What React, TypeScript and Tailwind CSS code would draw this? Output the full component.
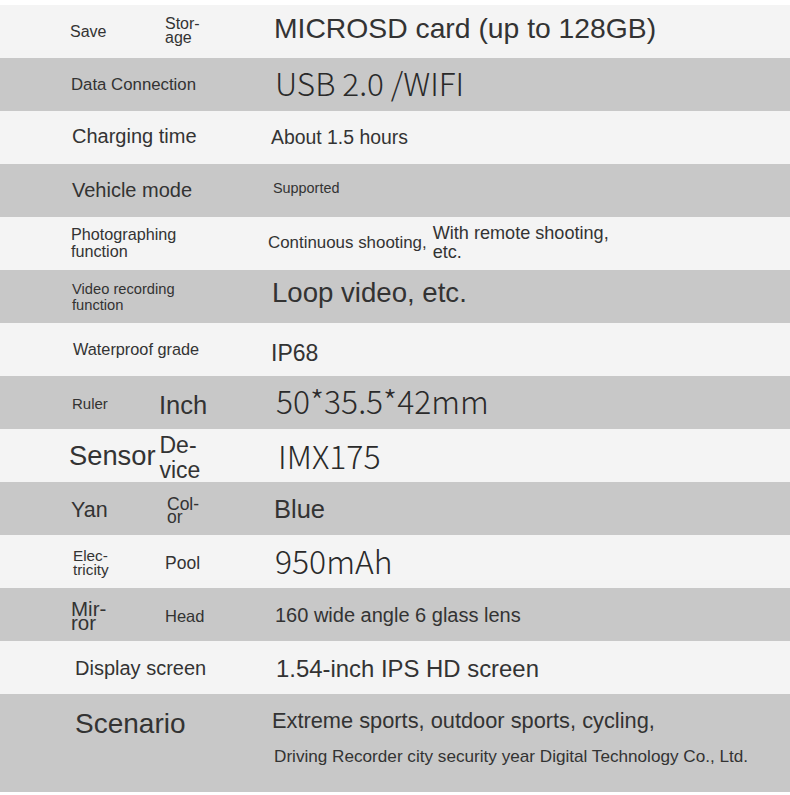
import React from "react";

const light = "bg-[#f4f4f4]";
const gray = "bg-[#c8c8c8]";
const cjk = "font-['Noto_Sans_CJK_SC','Noto_Sans',sans-serif] font-light text-[#2a2a2a]";

function Row({ bg, children, className = "" }: { bg: string; children: React.ReactNode; className?: string }) {
  return <div className={`flex h-[53px] items-center ${bg} ${className}`}>{children}</div>;
}

export default function App() {
  return (
    <div className="w-[790px] h-[795px] bg-white pt-[5px] text-[#333333] font-['Liberation_Sans',Arial,sans-serif] leading-none">
      <Row bg={light}>
        <div className="w-[268px] pl-[70px] flex items-center">
          <span className="w-[95px] text-[16px]">Save</span>
          <span className="text-[16px] leading-[14px] -mt-[2px]">Stor-<br />age</span>
        </div>
        <span className="ml-[6px] text-[28.3px] mb-[6px]">MICROSD card (up to 128GB)</span>
      </Row>
      <Row bg={gray}>
        <div className="w-[268px] pl-[71px]">
          <span className="text-[16.8px] block mt-[1px]">Data Connection</span>
        </div>
        <span className={`ml-[7px] text-[31.5px] mb-[4px] ${cjk}`}>USB 2.0 /WIFI</span>
      </Row>
      <Row bg={light}>
        <div className="w-[268px] pl-[72px]">
          <span className="text-[20px] block mb-[4px]">Charging time</span>
        </div>
        <span className="ml-[3px] text-[19.4px]">About 1.5 hours</span>
      </Row>
      <Row bg={gray}>
        <div className="w-[268px] pl-[72px]">
          <span className="text-[20px] block mb-[1px]">Vehicle mode</span>
        </div>
        <span className="ml-[5px] text-[14.4px] mb-[4px]">Supported</span>
      </Row>
      <Row bg={light}>
        <div className="w-[268px] pl-[71px]">
          <span className="text-[16.2px] leading-[17px] block -mt-[2px]">Photographing<br />function</span>
        </div>
        <span className="ml-[0px] text-[16.9px]">Continuous shooting,</span>
        <span className="ml-[6px] text-[18.1px] leading-[19px] mb-[1px]">With remote shooting,<br />etc.</span>
      </Row>
      <Row bg={gray}>
        <div className="w-[268px] pl-[72px]">
          <span className="text-[14.7px] leading-[16px] block">Video recording<br />function</span>
        </div>
        <span className="ml-[4px] text-[27.6px] mb-[8px]">Loop video, etc.</span>
      </Row>
      <Row bg={light}>
        <div className="w-[268px] pl-[73px]">
          <span className="text-[16.3px]">Waterproof grade</span>
        </div>
        <span className="ml-[3px] text-[23px] mt-[7px]">IP68</span>
      </Row>
      <Row bg={gray}>
        <div className="w-[268px] pl-[72px] flex items-center">
          <span className="w-[87px] text-[15px] mt-[2px]">Ruler</span>
          <span className="text-[25.5px] mt-[7px]">Inch</span>
        </div>
        <span className={`ml-[8px] text-[31.8px] mb-[3px] ${cjk}`}>50*35.5*42mm</span>
      </Row>
      <Row bg={light}>
        <div className="w-[268px] pl-[69px] flex items-center">
          <span className="text-[27.3px] mt-[1px]">Sensor</span>
          <span className="ml-[4px] text-[23px] leading-[25px] mt-[4px]">De-<br />vice</span>
        </div>
        <span className={`ml-[10px] text-[32px] mb-[2px] ${cjk}`}>IMX175</span>
      </Row>
      <Row bg={gray}>
        <div className="w-[268px] pl-[71px] flex items-center">
          <span className="w-[96px] text-[21.5px] mt-[5px]">Yan</span>
          <span className="text-[17.5px] leading-[13px] mt-[4px]">Col-<br />or</span>
        </div>
        <span className="ml-[6px] text-[25.5px] mt-[3px]">Blue</span>
      </Row>
      <Row bg={light}>
        <div className="w-[268px] pl-[73px] flex items-center">
          <span className="w-[92px] text-[15.3px] leading-[14px] mt-[2px]">Elec-<br />tricity</span>
          <span className="text-[17.5px] mt-[4px]">Pool</span>
        </div>
        <span className={`ml-[7px] text-[31.9px] mb-[2px] ${cjk}`}>950mAh</span>
      </Row>
      <Row bg={gray}>
        <div className="w-[268px] pl-[71px] flex items-center">
          <span className="w-[94px] text-[20.5px] leading-[14px] mt-[3px]">Mir-<br />ror</span>
          <span className="text-[16.5px] mt-[4px]">Head</span>
        </div>
        <span className="ml-[7px] text-[20px]">160 wide angle 6 glass lens</span>
      </Row>
      <Row bg={light}>
        <div className="w-[268px] pl-[75px]">
          <span className="text-[20px] block mb-[0px]">Display screen</span>
        </div>
        <span className="ml-[8px] text-[23.9px] mt-[3px]">1.54-inch IPS HD screen</span>
      </Row>
      <div className={`flex h-[98px] items-start ${gray}`}>
        <div className="w-[268px] pl-[75px] pt-[16px]">
          <span className="text-[28px] block">Scenario</span>
        </div>
        <div className="ml-[4px] pt-[16px] flex flex-col items-start">
          <span className="text-[21.8px] block">Extreme sports, outdoor sports, cycling,</span>
          <span className="ml-[2px] mt-[16px] text-[17.15px] block">Driving Recorder city security year Digital Technology Co., Ltd.</span>
        </div>
      </div>
    </div>
  );
}
